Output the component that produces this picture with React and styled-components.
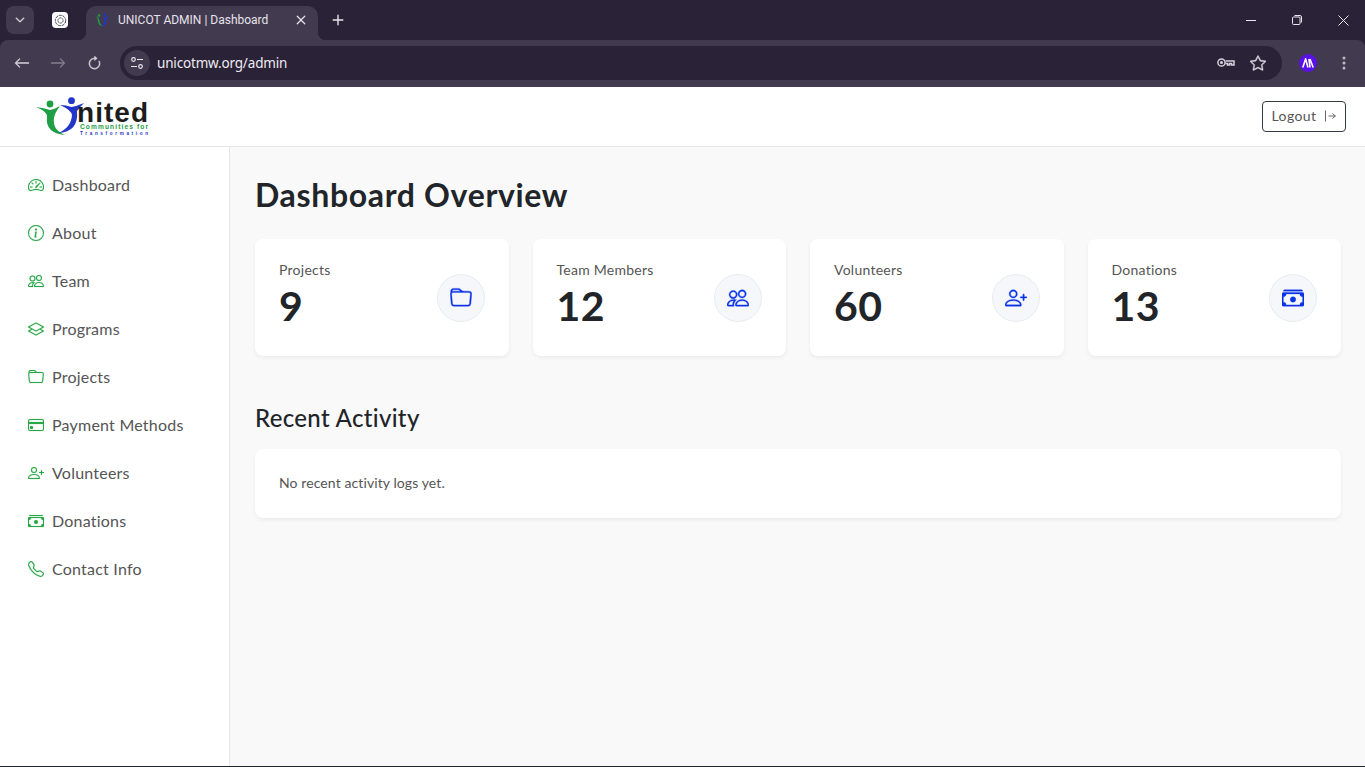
import React from 'react';
import styled, { createGlobalStyle } from 'styled-components';
import {
  BsSpeedometer2,
  BsInfoCircle,
  BsPeople,
  BsLayers,
  BsFolder,
  BsCreditCard,
  BsPersonPlus,
  BsCashStack,
  BsTelephone,
  BsChevronDown,
  BsArrowLeft,
  BsArrowRight,
  BsArrowClockwise,
  BsStar,
  BsX,
  BsPlus,
} from 'react-icons/bs';

const GlobalStyle = createGlobalStyle`
  html, body { margin: 0; padding: 0; height: 100%; }
  body { font-family: "Lato", "Noto Sans", sans-serif; background: #f9f9f9; overflow: hidden; }
  * { box-sizing: border-box; }
`;

const Window = styled.div`
  width: 1365px;
  height: 767px;
  display: flex;
  flex-direction: column;
  background: #2a2236;
  border-bottom: 1px solid #1c2233;
`;

/* browser chrome */
const TabStrip = styled.div`
  height: 40px;
  flex: none;
  display: flex;
  align-items: flex-end;
  padding-left: 6px;
  color: #e9e6ee;
`;

const TabSearch = styled.div`
  width: 28px;
  height: 28px;
  margin-bottom: 6px;
  border-radius: 8px;
  background: #423a4e;
  display: flex;
  align-items: center;
  justify-content: center;
  font-size: 10px;
`;

const PinnedTab = styled.div`
  width: 52px;
  height: 34px;
  padding-bottom: 6px;
  display: flex;
  align-items: center;
  justify-content: center;
`;

const PinnedIcon = styled.div`
  width: 16px;
  height: 16px;
  border-radius: 4px;
  background: #fff;
  display: flex;
  align-items: center;
  justify-content: center;
`;

const ActiveTab = styled.div`
  position: relative;
  width: 232px;
  height: 34px;
  background: #423a4e;
  border-radius: 10px 10px 0 0;
  display: flex;
  align-items: center;
  padding: 0 7px 6px 9px;
  font: 12px "Roboto", sans-serif;
  color: #e6e2ec;

  &::before,
  &::after {
    content: '';
    position: absolute;
    bottom: 0;
    width: 8px;
    height: 8px;
  }
  &::before {
    left: -8px;
    background: radial-gradient(circle at 0 0, transparent 8px, #423a4e 8.5px);
  }
  &::after {
    right: -8px;
    background: radial-gradient(circle at 100% 0, transparent 8px, #423a4e 8.5px);
  }
`;

const TabTitle = styled.span`
  flex: 1;
  margin-left: 7px;
  white-space: nowrap;
`;

const NewTab = styled.div`
  width: 40px;
  height: 34px;
  padding-bottom: 6px;
  display: flex;
  align-items: center;
  justify-content: center;
`;

const WindowControls = styled.div`
  margin-left: auto;
  margin-right: -1px;
  height: 40px;
  display: flex;
  align-items: center;
`;

const WindowButton = styled.div`
  width: 46px;
  height: 40px;
  display: flex;
  align-items: center;
  justify-content: center;
`;

const Toolbar = styled.div`
  height: 47px;
  flex: none;
  background: #423a4e;
  border-radius: 8px 8px 0 0;
  display: flex;
  align-items: center;
  padding: 0 3px 1px 4px;
  color: #d5d1db;
`;

const NavButton = styled.div`
  width: 36px;
  height: 34px;
  display: flex;
  align-items: center;
  justify-content: center;
  font-size: ${(p) => p.$size || 16}px;
  color: ${(p) => (p.$dim ? '#857f8f' : '#d5d1db')};
  svg {
    stroke: currentColor;
    stroke-width: 0.5;
  }
`;

const Omnibox = styled.div`
  width: 1162px;
  height: 34px;
  margin-left: 8px;
  border-radius: 17px;
  background: #2a2236;
  display: flex;
  align-items: center;
  padding: 0 8px 0 4px;
  font: 13.5px "Noto Sans", sans-serif;
  letter-spacing: -0.17px;
  color: #eeeaf3;
`;

const SiteInfo = styled.div`
  width: 26px;
  height: 26px;
  border-radius: 50%;
  background: #423a4e;
  display: flex;
  align-items: center;
  justify-content: center;
  margin-right: 7px;
`;

const OmniIcon = styled.div`
  width: 32px;
  height: 28px;
  display: flex;
  align-items: center;
  justify-content: center;
  font-size: 16px;
  color: #d5d1db;
  svg {
    stroke: currentColor;
    stroke-width: 0.4;
  }
`;

const Spacer = styled.div`
  flex: 1;
`;

const Avatar = styled.div`
  width: 18px;
  height: 18px;
  margin-left: 17px;
  border-radius: 50%;
  background: #5a10e8;
  display: flex;
  align-items: center;
  justify-content: center;
`;

const MenuButton = styled.div`
  width: 36px;
  height: 34px;
  margin-left: 9px;
  display: flex;
  align-items: center;
  justify-content: center;
`;

/* page */
const Header = styled.header`
  height: 60px;
  flex: none;
  background: #fff;
  border-bottom: 1px solid #e5e7eb;
  display: flex;
  align-items: center;
  justify-content: space-between;
  padding: 0 19px 0 36px;
`;

const LogoutButton = styled.button`
  height: 31px;
  width: 84px;
  padding: 0 0 2px;
  background: #fff;
  border: 1px solid #343a40;
  border-radius: 4px;
  color: #555;
  font: 14px "Lato", sans-serif;
  letter-spacing: 0.4px;
  display: flex;
  align-items: center;
  justify-content: center;
  gap: 8px;
`;

const Body = styled.div`
  flex: 1;
  display: flex;
  min-height: 0;
  background: #f9f9f9;
`;

const Sidebar = styled.nav`
  width: 230px;
  flex: none;
  background: #fff;
  border-right: 1px solid #e5e7eb;
  padding: 14px 0 0 28px;
  display: flex;
  flex-direction: column;
`;

const NavItem = styled.a`
  height: 48px;
  display: flex;
  align-items: center;
  gap: 8px;
  color: #555;
  font-size: 16px;
  letter-spacing: 0.22px;
  svg {
    flex: none;
    color: #28a745;
    font-size: 16px;
    stroke: currentColor;
    stroke-width: 0.15;
  }
`;

const NavLabel = styled.span`
  padding-bottom: 2px;
`;

const Main = styled.main`
  flex: 1;
  padding: 24px 24px 0 25px;
`;

const Title = styled.h1`
  margin: 0 0 24px;
  height: 44px;
  line-height: 48px;
  font-size: 32px;
  font-weight: 700;
  letter-spacing: 0.66px;
  color: #212529;
`;

const StatGrid = styled.div`
  display: grid;
  grid-template-columns: repeat(4, 1fr);
  gap: 24px;
`;

const Card = styled.div`
  background: #fff;
  border-radius: 8px;
  box-shadow: 0 2px 4px rgba(0, 0, 0, 0.06);
`;

const StatCard = styled(Card)`
  height: 117px;
  padding: 24px;
  display: flex;
  align-items: center;
  justify-content: space-between;
`;

const StatText = styled.div`
  margin-bottom: 2px;
`;

const StatLabel = styled.div`
  font-size: 14px;
  line-height: 14px;
  letter-spacing: 0.25px;
  color: #555;
`;

const StatValue = styled.div`
  font-size: 41px;
  line-height: 48px;
  font-weight: 700;
  letter-spacing: 0.5px;
  color: #212529;
  margin-top: 5px;
`;

const IconCircle = styled.div`
  width: 48px;
  height: 48px;
  border-radius: 50%;
  background: #f5f7fb;
  border: 1px solid #e9ecef;
  color: #0a33e8;
  font-size: 22px;
  display: flex;
  align-items: center;
  justify-content: center;
  svg {
    stroke: currentColor;
    stroke-width: 0.25;
  }
`;

const SectionTitle = styled.h2`
  margin: 48px 0 16px;
  height: 29px;
  line-height: 27px;
  font-size: 24px;
  font-weight: 500;
  letter-spacing: 0.33px;
  color: #212529;
`;

const ActivityCard = styled(Card)`
  height: 69px;
  padding: 23px 24px;
  font-size: 14px;
  line-height: 21px;
  letter-spacing: 0.1px;
  color: #555;
`;

const navItems = [
  ['Dashboard', BsSpeedometer2],
  ['About', BsInfoCircle],
  ['Team', BsPeople],
  ['Programs', BsLayers],
  ['Projects', BsFolder],
  ['Payment Methods', BsCreditCard],
  ['Volunteers', BsPersonPlus],
  ['Donations', BsCashStack],
  ['Contact Info', BsTelephone],
];

const stats = [
  ['Projects', '9', BsFolder],
  ['Team Members', '12', BsPeople],
  ['Volunteers', '60', BsPersonPlus],
  ['Donations', '13', BsCashStack],
];

function Logo() {
  return (
    <svg width="116" height="44" viewBox="0 0 116 44">
      <circle cx="14" cy="9" r="3.4" fill="#1e9e45" />
      <path d="M0 12 Q8 13 14 15 Q19 14 24 11 Q21 15 19 19 Q14 34 29 40 Q9 38 11 22 Q12 17 0 12Z" fill="#1e9e45" />
      <circle cx="35.5" cy="5.7" r="3.4" fill="#2236c8" />
      <path d="M24 10 Q30 10 35.5 12 Q41 11 48 8 Q44 12 41 16 Q43 37 22 38 Q35 33 36 20 Q35 15 24 10Z" fill="#2236c8" />
      <text x="41" y="27" fontFamily="'Liberation Sans', sans-serif" fontWeight="700" fontSize="28" textLength="71" fill="#1c1c1c">nited</text>
      <text x="44" y="34.3" fontFamily="'Liberation Sans', sans-serif" fontWeight="700" fontSize="6.6" textLength="68" fill="#1e9e45">Communities for</text>
      <text x="44" y="40" fontFamily="'Liberation Sans', sans-serif" fontWeight="700" fontSize="4.6" textLength="68" fill="#2236c8">Transformation</text>
    </svg>
  );
}

function App() {
  return (
    <Window>
      <GlobalStyle />
      <TabStrip>
        <TabSearch>
          <BsChevronDown strokeWidth={1.2} />
        </TabSearch>
        <PinnedTab>
          <PinnedIcon>
            <svg width="13" height="13" viewBox="0 0 13 13" fill="none" stroke="#444" strokeWidth="1">
              <circle cx="6.5" cy="6.5" r="5.2" strokeDasharray="3 0.7" />
              <circle cx="6.5" cy="6.5" r="2.6" strokeDasharray="2 0.6" />
            </svg>
          </PinnedIcon>
        </PinnedTab>
        <ActiveTab>
          <svg width="16" height="16" viewBox="0 0 16 16" fill="none">
            <circle cx="4" cy="3.5" r="1.2" fill="#1e9e45" />
            <circle cx="10" cy="2.5" r="1.2" fill="#2236c8" />
            <path d="M1 4 Q4 5 4.5 9 Q5 13 8 14 Q3 14 3 9 Q3 6 1 4Z" fill="#1e9e45" />
            <path d="M7 4 Q9 5 9.5 9 Q9 13 7 14 Q12 14 11.5 8 L13 4 L10 5.5Z" fill="#2236c8" />
          </svg>
          <TabTitle>UNICOT ADMIN | Dashboard</TabTitle>
          <BsX size={20} />
        </ActiveTab>
        <NewTab>
          <BsPlus size={22} />
        </NewTab>
        <WindowControls>
          <WindowButton>
            <svg width="10" height="10" viewBox="0 0 10 10" stroke="#e9e6ee"><path d="M0 5.5h10" /></svg>
          </WindowButton>
          <WindowButton>
            <svg width="10" height="10" viewBox="0 0 10 10" fill="none" stroke="#e9e6ee"><rect x="0.5" y="2" width="7.5" height="7.5" rx="1" /><path d="M2.5 0.5h5.5a1.5 1.5 0 0 1 1.5 1.5v5.5" /></svg>
          </WindowButton>
          <WindowButton>
            <svg width="11" height="11" viewBox="0 0 11 11" stroke="#e9e6ee"><path d="M0.5 0.5l10 10M10.5 0.5l-10 10" /></svg>
          </WindowButton>
        </WindowControls>
      </TabStrip>
      <Toolbar>
        <NavButton><BsArrowLeft /></NavButton>
        <NavButton $dim><BsArrowRight /></NavButton>
        <NavButton $size={15}><BsArrowClockwise /></NavButton>
        <Omnibox>
          <SiteInfo>
            <svg width="14" height="14" viewBox="0 0 14 14" fill="none" stroke="#e9e6ee" strokeWidth="1.2">
              <circle cx="3.5" cy="3.5" r="1.8" /><path d="M7 3.5h6M1 10.5h6" /><circle cx="10.5" cy="10.5" r="1.8" />
            </svg>
          </SiteInfo>
          unicotmw.org/admin
          <Spacer />
          <OmniIcon>
            <svg width="18" height="12" viewBox="0 0 18 12" fill="none" style={{ stroke: '#d5d1db', strokeWidth: 1.5 }}>
              <circle cx="4.5" cy="5.5" r="3.6" />
              <path d="M8.5 4h8.5v4h-2.5v-1.5h-2v1.5h-2V6.5h-2" />
              <circle cx="4.5" cy="5.5" r="0.8" fill="#d5d1db" />
            </svg>
          </OmniIcon>
          <OmniIcon><BsStar /></OmniIcon>
        </Omnibox>
        <Avatar>
          <svg width="12" height="10" viewBox="0 0 12 10" fill="none" stroke="#fff" strokeWidth="1.6">
            <path d="M0.8 9.5L3.6 1L6 9.5M7 1L8 9.5M8 1L11.2 9.5" />
          </svg>
        </Avatar>
        <MenuButton>
          <svg width="4" height="14" viewBox="0 0 4 14" fill="#bdb9c4">
            <circle cx="2" cy="2" r="1.5" /><circle cx="2" cy="7" r="1.5" /><circle cx="2" cy="12" r="1.5" />
          </svg>
        </MenuButton>
      </Toolbar>
      <Header>
        <Logo />
        <LogoutButton>
          Logout
          <svg width="12" height="12" viewBox="0 0 12 12" fill="none" stroke="#666" strokeWidth="1">
            <path d="M1.5 0.5v11M4.5 6h7M8.5 3.5l2.8 2.5-2.8 2.5" />
          </svg>
        </LogoutButton>
      </Header>
      <Body>
        <Sidebar>
          {navItems.map(([label, Icon]) => (
            <NavItem key={label}>
              <Icon />
              <NavLabel>{label}</NavLabel>
            </NavItem>
          ))}
        </Sidebar>
        <Main>
          <Title>Dashboard Overview</Title>
          <StatGrid>
            {stats.map(([label, value, Icon]) => (
              <StatCard key={label}>
                <StatText>
                  <StatLabel>{label}</StatLabel>
                  <StatValue>{value}</StatValue>
                </StatText>
                <IconCircle><Icon /></IconCircle>
              </StatCard>
            ))}
          </StatGrid>
          <SectionTitle>Recent Activity</SectionTitle>
          <ActivityCard>No recent activity logs yet.</ActivityCard>
        </Main>
      </Body>
    </Window>
  );
}

export default App;
